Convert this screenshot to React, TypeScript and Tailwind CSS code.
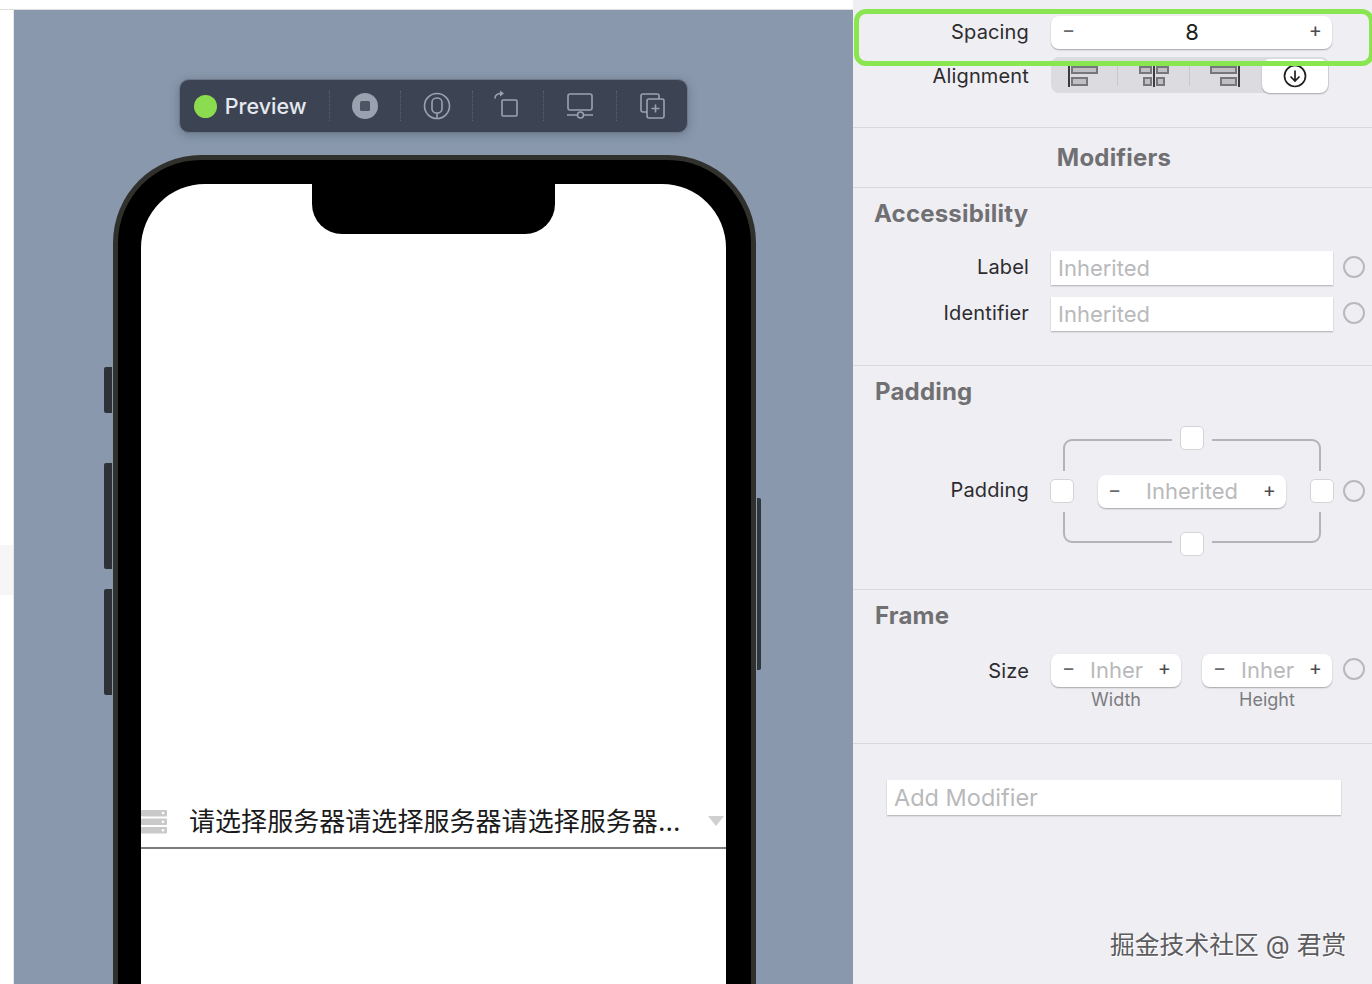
import { ReactNode } from "react";

const FONT = "font-['Inter','Noto_Sans_CJK_SC',sans-serif]";

function Sep() {
  return <span className="h-[30px] border-l border-dotted border-[#5b6372]" />;
}

function ToolbarIcon({ children, className = "" }: { children: ReactNode; className?: string }) {
  return (
    <svg width="30" height="30" viewBox="0 0 30 30" fill="none" stroke="#9aa2b0" strokeWidth="1.6" className={className}>
      {children}
    </svg>
  );
}

function Toolbar() {
  return (
    <div className="ml-[66px] flex h-[54px] w-[509px] items-center rounded-[10px] border border-[#6d7789] bg-[#3c4454] pl-[14px] shadow-[0_2px_10px_rgba(50,60,75,0.35)]">
      <span className="h-[23px] w-[23px] rounded-full bg-[#8bdc4f]" />
      <span className="ml-[8px] w-[105px] text-[21.5px] font-medium text-[#e6e9ef]">Preview</span>
      <Sep />
      <div className="flex w-[71px] justify-center">
        <ToolbarIcon>
          <circle cx="15" cy="15" r="13" fill="#9aa2b0" stroke="none" />
          <rect x="10" y="10" width="10" height="10" rx="1.5" fill="#4d5564" stroke="none" />
        </ToolbarIcon>
      </div>
      <Sep />
      <div className="flex w-[71px] justify-center">
        <ToolbarIcon>
          <circle cx="15" cy="15" r="12.5" />
          <rect x="10" y="7" width="10" height="15" rx="4.5" />
          <path d="M15 22v5" />
        </ToolbarIcon>
      </div>
      <Sep />
      <div className="flex w-[71px] justify-center">
        <ToolbarIcon className="-mt-[4px] -ml-[4px]">
          <rect x="11" y="11" width="15" height="16" rx="1" />
          <path d="M4 9.5C4 6 6.5 4.5 10.5 4.5" />
          <path d="M9 1.5l4 3-4 3" fill="#9aa2b0" stroke="none" />
        </ToolbarIcon>
      </div>
      <Sep />
      <div className="flex w-[72px] justify-center pl-[1px]">
        <ToolbarIcon>
          <rect x="3" y="3" width="24" height="16" rx="2" />
          <path d="M2 24h10M19 24h9" />
          <circle cx="15.5" cy="24" r="3" />
        </ToolbarIcon>
      </div>
      <Sep />
      <div className="flex w-[71px] justify-center">
        <ToolbarIcon>
          <path d="M10 21H6a2 2 0 0 1-2-2V5a2 2 0 0 1 2-2h14a2 2 0 0 1 2 2v3" />
          <rect x="10" y="8" width="17" height="19" rx="2" />
          <path d="M18.5 13.5v8M14.5 17.5h8" />
        </ToolbarIcon>
      </div>
    </div>
  );
}

function Phone() {
  return (
    <div className="relative mt-[22px] h-[880px] w-[643px] rounded-t-[88px] border-x-[5px] border-t-[5px] border-[#30302c] bg-black px-[23px] pt-[24px]">
      <span className="absolute -left-[14px] top-[207px] h-[46px] w-[8px] rounded-l-[2px] bg-[#2e3238]" />
      <span className="absolute -left-[14px] top-[303px] h-[106px] w-[8px] rounded-l-[2px] bg-[#2e3238]" />
      <span className="absolute -left-[14px] top-[429px] h-[106px] w-[8px] rounded-l-[2px] bg-[#2e3238]" />
      <span className="absolute -right-[10px] top-[338px] h-[172px] w-[4px] rounded-r-[2px] bg-[#2f3640]" />
      <div className="relative h-[820px] w-[585px] rounded-t-[64px] bg-white pt-[616px]">
        <div className="absolute left-[171px] top-0 h-[50px] w-[243px] rounded-b-[30px] bg-black" />
        <div className="flex h-[49px] items-center border-b-2 border-[#7c7c7c] pb-[4px]">
          <svg width="26" height="24" viewBox="0 0 26 24" fill="#c9c9c9" className="shrink-0">
            <rect x="0" y="0" width="26" height="6.5" rx="1" />
            <rect x="0" y="8.5" width="26" height="6.5" rx="1" />
            <rect x="0" y="17" width="26" height="6.5" rx="1" />
            <circle cx="22" cy="3" r="1.3" fill="#fff" />
            <circle cx="22" cy="11.7" r="1.3" fill="#fff" />
            <circle cx="22" cy="20.2" r="1.3" fill="#fff" />
          </svg>
          <span className="ml-[22px] text-[26px] leading-[34px] tracking-[0.05px] whitespace-nowrap text-[#1a1a1a]">
            请选择服务器请选择服务器请选择服务器...
          </span>
          <span className="ml-[27px] h-0 w-0 -translate-y-[1px] border-x-[8px] border-t-[10px] border-x-transparent border-t-[#d0d0d0]" />
        </div>
      </div>
    </div>
  );
}

function Label({ children, className = "pb-[2px]" }: { children: ReactNode; className?: string }) {
  return <span className={`w-[176px] shrink-0 text-right text-[20px] tracking-[0.15px] text-[#2c2c2e] ${className}`}>{children}</span>;
}

function Radio() {
  return <span className="block h-[22px] w-[22px] shrink-0 rounded-full border-2 border-[#b9b9bd]" />;
}

function Stepper({
  value,
  className = "",
  muted = true,
  inset = "pl-[11px] pr-[10px]",
  signs = "-translate-y-[3px]",
}: {
  value: string;
  className?: string;
  muted?: boolean;
  inset?: string;
  signs?: string;
}) {
  return (
    <div className={`flex h-[33px] items-center justify-between rounded-[8px] bg-white shadow-[0_1px_1.5px_rgba(0,0,0,0.3)] ${inset} ${className}`}>
      <span className={`text-[20px] leading-none text-[#6a6a6c] ${signs}`}>−</span>
      <span className={`text-[22px] ${muted ? "text-[#b9b9bb]" : "text-[#1f1f21]"}`}>{value}</span>
      <span className={`text-[20px] leading-none text-[#4c4c4e] ${signs}`}>+</span>
    </div>
  );
}

function TextField({ placeholder }: { placeholder: string }) {
  return (
    <div className="flex h-[34px] w-[282px] items-center bg-white pl-[7px] text-[22px] text-[#b9b9bb] shadow-[0_1px_1.5px_rgba(0,0,0,0.28)]">
      {placeholder}
    </div>
  );
}

function Heading({ children }: { children: ReactNode }) {
  return <h2 className="text-[24px] leading-[30px] font-bold tracking-[0.2px] text-[#707073]">{children}</h2>;
}

function Check() {
  return <span className="block h-[24px] w-[24px] rounded-[5px] border border-[#d4d4d6] bg-white" />;
}

function AlignIcon({ kind }: { kind: "left" | "center" | "right" }) {
  const s = "#77777b";
  const f = "#c0c0c4";
  return (
    <svg width="32" height="24" viewBox="0 0 32 24" fill={f} stroke={s} strokeWidth="2">
      {kind === "left" && (
        <>
          <path d="M2 1v22" stroke="#3c3c3f" />
          <rect x="5" y="3" width="25" height="6" />
          <rect x="5" y="14" width="15" height="7" />
        </>
      )}
      {kind === "center" && (
        <>
          <path d="M16 1v22" stroke="#3c3c3f" />
          <rect x="2" y="3" width="11" height="6" />
          <rect x="19" y="3" width="11" height="6" />
          <rect x="6" y="14" width="7" height="7" />
          <rect x="19" y="14" width="7" height="7" />
        </>
      )}
      {kind === "right" && (
        <>
          <path d="M30 1v22" stroke="#3c3c3f" />
          <rect x="2" y="3" width="25" height="6" />
          <rect x="12" y="14" width="15" height="7" />
        </>
      )}
    </svg>
  );
}

function Alignment() {
  return (
    <div className="flex h-[36px] w-[278px] items-center rounded-[8px] bg-[#dcdbe0] pt-[2px]">
      <div className="flex w-[66px] justify-center pr-[3px]"><AlignIcon kind="left" /></div>
      <span className="h-[20px] border-l border-[#c8c8cc]" />
      <div className="flex w-[71px] justify-center"><AlignIcon kind="center" /></div>
      <span className="h-[20px] border-l border-[#c8c8cc]" />
      <div className="flex w-[70px] justify-center"><AlignIcon kind="right" /></div>
      <div className="ml-[2px] flex h-[34px] w-[66px] items-center justify-center rounded-[8px] bg-white shadow-[0_1px_1.5px_rgba(0,0,0,0.3)]">
        <svg width="24" height="24" viewBox="0 0 24 24" fill="none" stroke="#1f1f21" strokeWidth="1.7">
          <circle cx="12" cy="12" r="10.5" />
          <path d="M12 6.5v10.5M7.5 12.5l4.5 4.5 4.5-4.5" />
        </svg>
      </div>
    </div>
  );
}

function PaddingWidget() {
  return (
    <div className="relative flex h-[130px] w-[284px] flex-col justify-between">
      <svg width="284" height="130" viewBox="0 0 284 130" fill="none" stroke="#b4b4b8" strokeWidth="2" className="absolute inset-0">
        <path d="M14 45V22a8 8 0 0 1 8-8h100M162 14h100a8 8 0 0 1 8 8v23" />
        <path d="M14 86v22a8 8 0 0 0 8 8h100M162 116h100a8 8 0 0 0 8-8V86" />
      </svg>
      <div className="relative flex justify-center"><Check /></div>
      <div className="relative flex items-center justify-between">
        <Check />
        <Stepper value="Inherited" className="w-[188px]" inset="px-[10px]" signs="-translate-y-[1px]" />
        <Check />
      </div>
      <div className="relative flex justify-center"><Check /></div>
    </div>
  );
}

function Inspector() {
  return (
    <aside className="relative h-[984px] w-[519px] shrink-0 bg-[#efeef3]">
      <section className="h-[128px] border-b border-[#d9d9dc] pt-[16px]">
        <div className="flex items-center gap-[22px]">
          <Label>Spacing</Label>
          <Stepper value="8" muted={false} className="w-[281px]" />
        </div>
        <div className="mt-[8px] flex items-center gap-[22px]">
          <Label className="pt-[2px]">Alignment</Label>
          <Alignment />
        </div>
      </section>
      <section className="flex h-[60px] items-center justify-center border-b border-[#d9d9dc] pl-[3px]">
        <Heading>Modifiers</Heading>
      </section>
      <section className="h-[178px] border-b border-[#d9d9dc] pt-[11px] pl-[21px]">
        <Heading>Accessibility</Heading>
        <div className="-ml-[21px] mt-[22px] flex items-center">
          <Label>Label</Label>
          <div className="ml-[22px]"><TextField placeholder="Inherited" /></div>
          <div className="ml-[10px] pb-[2px]"><Radio /></div>
        </div>
        <div className="-ml-[21px] mt-[12px] flex items-center">
          <Label>Identifier</Label>
          <div className="ml-[22px]"><TextField placeholder="Inherited" /></div>
          <div className="ml-[10px] pb-[2px]"><Radio /></div>
        </div>
      </section>
      <section className="h-[224px] border-b border-[#d9d9dc] pt-[11px] pl-[22px]">
        <Heading>Padding</Heading>
        <div className="-ml-[22px] mt-[19px] flex items-center">
          <Label>Padding</Label>
          <div className="ml-[21px]"><PaddingWidget /></div>
          <div className="ml-[9px]"><Radio /></div>
        </div>
      </section>
      <section className="h-[154px] border-b border-[#d9d9dc] pt-[11px] pl-[22px]">
        <Heading>Frame</Heading>
        <div className="-ml-[22px] mt-[23px] flex items-start">
          <div className="flex h-[33px] items-center"><Label className="pb-0">Size</Label></div>
          <div className="ml-[22px] w-[130px]">
            <Stepper value="Inher" />
            <p className="-mt-[1px] text-center text-[18px] text-[#7c7c80]">Width</p>
          </div>
          <div className="ml-[21px] w-[130px]">
            <Stepper value="Inher" />
            <p className="-mt-[1px] text-center text-[18px] text-[#7c7c80]">Height</p>
          </div>
          <div className="ml-[11px] flex h-[33px] items-center pb-[3px]"><Radio /></div>
        </div>
      </section>
      <div className="ml-[34px] mt-[36px] flex h-[35px] w-[454px] items-center bg-white pl-[7px] text-[23.5px] text-[#b9b9bb] shadow-[0_1px_1.5px_rgba(0,0,0,0.28)]">
        Add Modifier
      </div>
      <div className="pointer-events-none absolute left-[1px] top-[9px] h-[57px] w-[520px] rounded-[12px] border-[5px] border-[#8ae650]" />
      <div className="absolute left-[257px] top-[927px] text-[24.8px] whitespace-nowrap text-[#5c5c5e] [text-shadow:1px_1px_0_#fff]">
        掘金技术社区 @ 君赏
      </div>
    </aside>
  );
}

export default function App() {
  return (
    <div className={`flex h-[984px] w-[1372px] overflow-hidden bg-white ${FONT}`}>
      <div className="flex w-[853px] shrink-0 flex-col">
        <div className="h-[10px] shrink-0 border-b border-[#dedede] bg-white" />
        <div className="flex min-h-0 flex-1">
          <div className="flex w-[14px] shrink-0 flex-col border-r border-[#e9e6ea] bg-white pt-[535px]">
            <span className="h-[50px] bg-[#f6f6f7]" />
          </div>
          <main className="min-w-0 flex-1 overflow-hidden bg-[#8998ad] pt-[69px] pl-[99px]">
            <Toolbar />
            <Phone />
          </main>
        </div>
      </div>
      <Inspector />
    </div>
  );
}
